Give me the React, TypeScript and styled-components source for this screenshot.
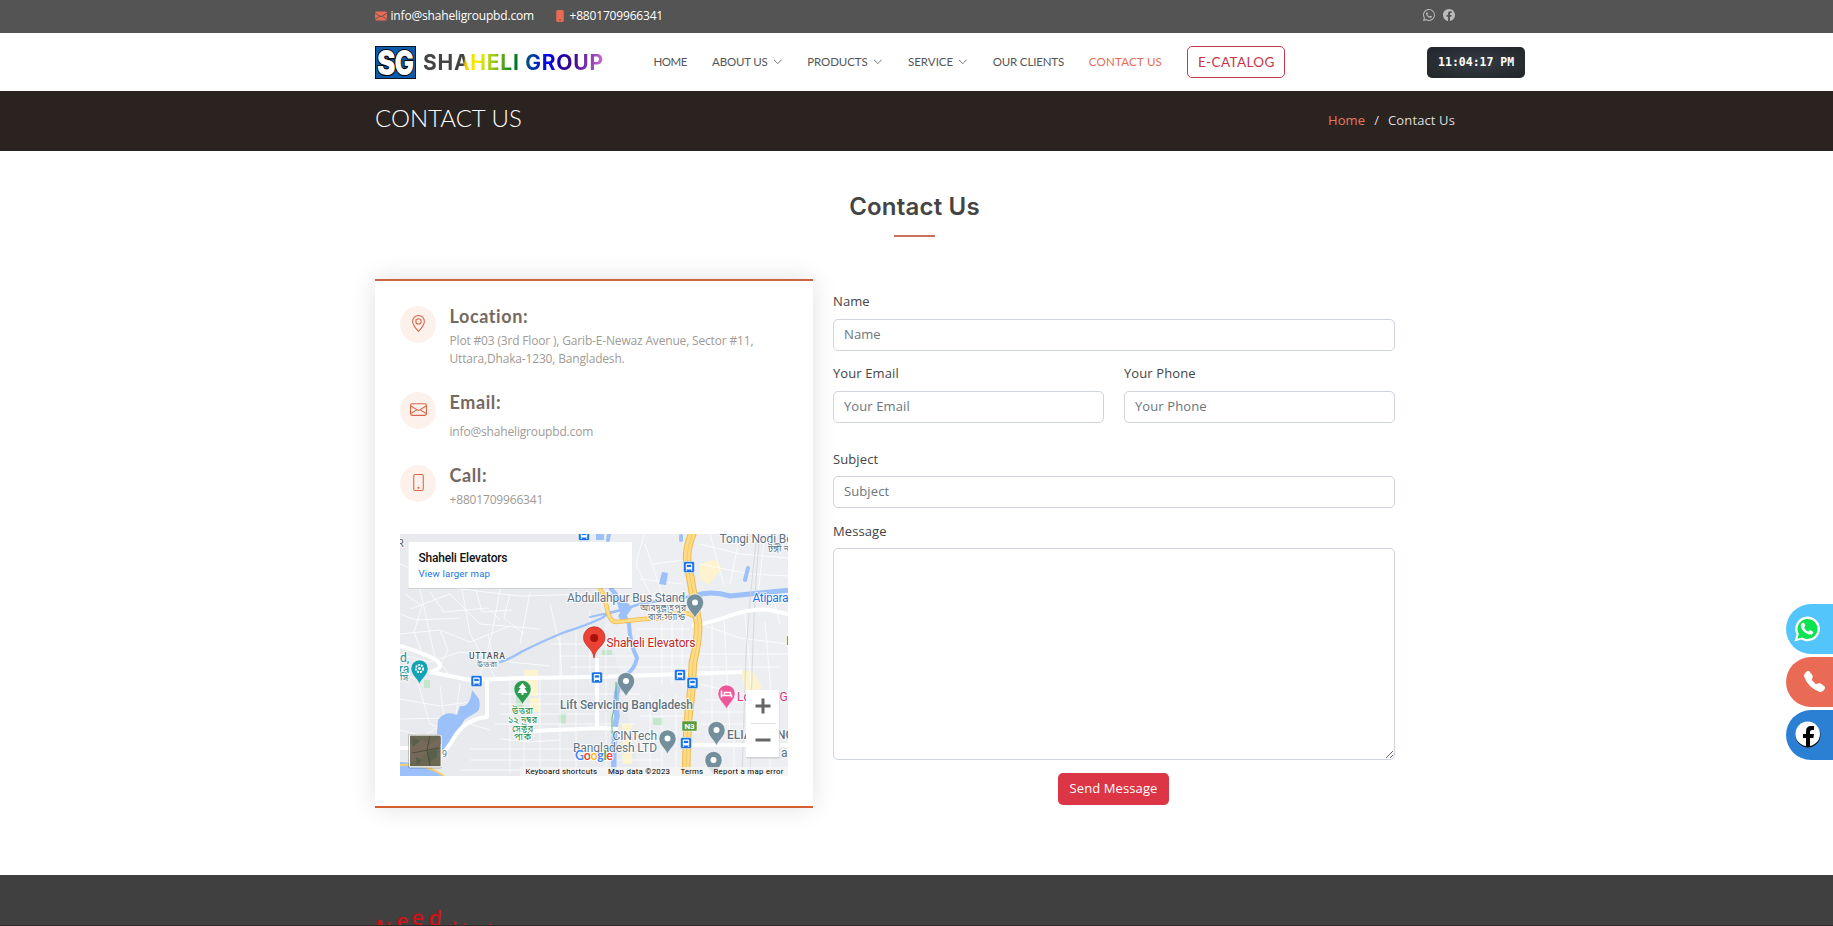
import React from "react";
import styled, { createGlobalStyle } from "styled-components";
import {
  BsChevronDown,
  BsEnvelope,
  BsEnvelopeFill,
  BsFacebook,
  BsGeoAlt,
  BsPhone,
  BsPhoneFill,
  BsTelephoneFill,
  BsWhatsapp,
} from "react-icons/bs";

const GlobalStyle = createGlobalStyle`
  * { box-sizing: border-box; }
  body {
    margin: 0;
    background: #fff;
    color: #444;
    font-family: "Open Sans", "Noto Sans", sans-serif;
    font-size: 13px;
    overflow: hidden;
  }
  h1, h2, h4, p { margin: 0; }
  a { color: inherit; text-decoration: none; }
`;

const Page = styled.div`
  height: 926px;
  display: flex;
  flex-direction: column;
  overflow: hidden;
`;

const Band = styled.div<{ $height: number; $bg: string }>`
  flex: none;
  height: ${(p) => p.$height}px;
  background: ${(p) => p.$bg};
  padding-right: 3px;
`;

const Container = styled.div`
  width: 1080px;
  height: 100%;
  margin: 0 auto;
  display: flex;
  align-items: center;
`;

const TopContact = styled.a<{ $width: number }>`
  display: flex;
  align-items: center;
  gap: 3.5px;
  width: ${(p) => p.$width}px;
  margin-bottom: 2px;
  color: #fff;
  font-size: 12px;
  letter-spacing: -0.18px;
  white-space: nowrap;
  svg { flex: none; color: #ea6a56; }
`;

const Socials = styled.div`
  display: flex;
  gap: 8px;
  margin: 0 0 3px auto;
  color: #bbb;
`;

const Logo = styled.a`
  display: flex;
  align-items: center;
  gap: 7px;
  width: 278.5px;
  flex: none;
  margin-top: 1px;
`;

const LogoName = styled.h1`
  font: 700 21px/28px Inter, sans-serif;
  letter-spacing: 0.75px;
  margin-top: 1px;
  white-space: nowrap;
  color: transparent;
  background: linear-gradient(
    100deg,
    #444 0%, #444 23%, #f2c800 24%, #f7f000 30%, #9bc81c 39%, #3b9b1c 46%, #007a1e 51%,
    #005a70 56%, #0018d8 65%, #0a00e0 70%, #2a0090 78%, #4b0f94 84%, #8a3cb4 91%, #e07be0 100%
  );
  background-clip: text;
  -webkit-background-clip: text;
`;

const Nav = styled.nav`
  display: flex;
  align-items: center;
  gap: 25.1px;
  flex: none;
`;

const NavLink = styled.a<{ $active?: boolean }>`
  display: flex;
  align-items: center;
  gap: 5px;
  color: ${(p) => (p.$active ? "#e96b56" : "#555")};
  font: 400 11.5px/18px Lato, sans-serif;
  white-space: nowrap;
`;

const NavText = styled.span<{ $width: number; $space: number }>`
  width: ${(p) => p.$width}px;
  letter-spacing: ${(p) => p.$space}px;
`;

const CatalogButton = styled.a`
  display: flex;
  justify-content: center;
  align-items: center;
  width: 98px;
  height: 32px;
  border: 1px solid #c9364a;
  border-radius: 5px;
  color: #c9364a;
  font: 400 13.5px/20px Lato, sans-serif;
  letter-spacing: 0.4px;
  white-space: nowrap;
`;

const Clock = styled.div`
  display: flex;
  justify-content: center;
  align-items: center;
  flex: none;
  width: 98px;
  height: 31px;
  margin-left: 141.8px;
  border-radius: 5px;
  background: radial-gradient(ellipse, #353c42, #212529);
  color: #fff;
  font: 700 11.5px/14px "DejaVu Sans Mono", monospace;
`;

const PageTitle = styled.h2`
  margin-bottom: 6px;
  color: #fff;
  font: 300 24px/30px Lato, sans-serif;
`;

const Breadcrumb = styled.div`
  display: flex;
  gap: 9px;
  margin: 0 0 2px auto;
  color: #ddd;
  font-size: 13px;
  letter-spacing: 0.12px;
  a { color: #e8795c; }
`;

const Main = styled.main`
  flex: none;
  width: 1080px;
  height: 724px;
  margin-left: 375px;
  padding-top: 40px;
`;

const SectionTitle = styled.h2`
  display: flex;
  flex-direction: column;
  align-items: center;
  width: 1079px;
  height: 88px;
  color: #444;
  font: 600 24px/32px Inter, sans-serif;
  letter-spacing: 0.2px;
  &::after {
    content: "";
    width: 41px;
    height: 2px;
    margin-top: 12px;
    background: #cb7060;
  }
`;

const Columns = styled.div`
  display: flex;
  gap: 20px;
  align-items: flex-start;
`;

const InfoCard = styled.section`
  width: 438px;
  height: 529px;
  border-top: 2px solid #c8643f;
  border-bottom: 2px solid #d4602f;
  padding: 25px 25px 0;
  background: #fff;
  box-shadow: 0 0 24px rgba(0, 0, 0, 0.12);
`;

const InfoRow = styled.div<{ $height: number; $gap: number }>`
  display: flex;
  gap: 13.5px;
  height: ${(p) => p.$height}px;
  h4 {
    color: #75695f;
    font: 700 18px/21px Lato, sans-serif;
    letter-spacing: 0.6px;
    margin-bottom: ${(p) => p.$gap}px;
  }
  p {
    color: #a09a94;
    font-size: 12px;
    line-height: 18px;
    letter-spacing: -0.17px;
    white-space: nowrap;
  }
`;

const InfoIcon = styled.span`
  display: flex;
  justify-content: center;
  align-items: center;
  width: 36px;
  height: 37px;
  padding-bottom: 2px;
  border-radius: 50%;
  background: #fdf1ec;
  color: #dc6546;
`;

const MapFrame = styled.div`
  width: 388px;
  height: 242px;
  overflow: hidden;
  svg { display: block; }
`;

const Form = styled.form`
  width: 562px;
  padding-top: 12px;
`;

const FieldRow = styled.div<{ $height: number }>`
  display: grid;
  grid-auto-flow: column;
  grid-auto-columns: 1fr;
  gap: 20px;
  height: ${(p) => p.$height}px;
`;

const Field = styled.label<{ $gap?: number }>`
  display: flex;
  flex-direction: column;
  gap: ${(p) => p.$gap ?? 8}px;
  line-height: 20px;
  color: #444;
  letter-spacing: 0.1px;
`;

const Input = styled.input`
  width: 100%;
  height: 32px;
  padding: 0 10px 2px;
  border: 1px solid #ced4da;
  border-radius: 5px;
  background: #fff;
  font: 400 13px "Open Sans", sans-serif;
  letter-spacing: 0.1px;
  &::placeholder { color: #6c757d; opacity: 1; }
`;

const Textarea = styled.textarea`
  display: block;
  width: 100%;
  height: 212px;
  padding: 8px 10px;
  border: 1px solid #ced4da;
  border-radius: 5px;
  background: #fff;
  font: 400 13px "Open Sans", sans-serif;
`;

const SendButton = styled.button`
  display: block;
  width: 111px;
  height: 32px;
  margin: 13px 0 0 225px;
  padding: 0 0 2px;
  border: 0;
  border-radius: 5px;
  background: #dc3545;
  color: #fff;
  font: 400 13px "Open Sans", sans-serif;
  letter-spacing: 0.1px;
`;

const Footer = styled.footer`
  flex: 1;
  background: #404040;
  border-bottom: 1px solid #302c2e;
  padding: 30px 0 0 375px;
  display: flex;
  overflow: hidden;
`;

const WaveLetter = styled.span<{ $w: number; $y: number; $r: number }>`
  width: ${(p) => p.$w}px;
  color: #cc1418;
  font: 600 21px/26px "Open Sans", sans-serif;
  transform: translateY(${(p) => p.$y}px) rotate(${(p) => p.$r}deg);
`;

const SideDock = styled.aside`
  position: fixed;
  top: 604px;
  right: 0;
  display: flex;
  flex-direction: column;
  gap: 3px;
`;

const SideButton = styled.a<{ $bg: string; $pad: number }>`
  display: flex;
  align-items: center;
  width: 47px;
  height: 50px;
  padding: 0 0 1px ${(p) => p.$pad}px;
  border-radius: 25px 0 0 25px;
  background: ${(p) => p.$bg};
  color: #fff;
`;

function LogoMark() {
  return (
    <svg width="41" height="33" viewBox="0 0 41 33">
      <rect x="0.5" y="0.5" width="40" height="32" fill="#0b5cab" stroke="#0a1626" />
      <g
        fontFamily="Inter, sans-serif"
        fontWeight="900"
        fontSize="34"
        fill="#fff"
        stroke="#000"
        strokeWidth="2.2"
        paintOrder="stroke"
        strokeLinejoin="round"
      >
        <text x="2" y="28.8" textLength="18.5" lengthAdjust="spacingAndGlyphs">S</text>
        <text x="19.5" y="28.8" textLength="19.5" lengthAdjust="spacingAndGlyphs">G</text>
      </g>
    </svg>
  );
}

function Pin({ x, y, color, children }: { x: number; y: number; color: string; children?: React.ReactNode }) {
  return (
    <g transform={`translate(${x} ${y})`}>
      <path
        d="M0 0C-1-5-8.6-9-8.6-16A8.6 8.6 0 0 1 8.6-16C8.6-9 1-5 0 0Z"
        fill={color}
        stroke="#fff"
        strokeWidth="0.6"
      />
      {children ?? <circle cy="-16" r="3" fill="#fff" />}
    </g>
  );
}

function BusStop({ x, y }: { x: number; y: number }) {
  return (
    <g transform={`translate(${x} ${y})`}>
      <rect x="-5.5" y="-5.5" width="11" height="11" rx="1.5" fill="#1a73e8" stroke="#fff" strokeWidth="0.5" />
      <rect x="-3.2" y="-3.5" width="6.4" height="6" rx="1" fill="#fff" />
      <rect x="-2.2" y="-2.2" width="4.4" height="2.3" fill="#1a73e8" />
      <path d="M-2.6 2.5v1.2M2.6 2.5v1.2" stroke="#fff" strokeWidth="1.2" />
    </g>
  );
}

type LabelProps = {
  x: number;
  y: number;
  w?: number;
  size?: number;
  color?: string;
  weight?: number;
  halo?: boolean;
  children: React.ReactNode;
};

function MapLabel({ x, y, w, size = 12, color = "#5f7381", weight = 400, halo = true, children }: LabelProps) {
  return (
    <text
      x={x}
      y={y}
      textLength={w}
      fontSize={size}
      fill={color}
      fontWeight={weight}
      stroke={halo ? "#fff" : "none"}
      strokeWidth={halo ? 2 : 0}
      strokeOpacity="0.75"
      paintOrder="stroke"
    >
      {children}
    </text>
  );
}

const STREETS = [
  "M0 30L60 55L120 62L190 60", "M10 75L50 60L80 90L140 95", "M20 55L34 120L50 142", "M62 55L70 100L96 145",
  "M100 55L92 100L80 142", "M130 58L120 110", "M150 70L160 112L162 145", "M0 100L40 96L70 108L110 92",
  "M0 120L30 128L60 118L96 124", "M18 150L30 190L60 200", "M40 152L46 200", "M0 165L40 172L70 168",
  "M0 185L50 184L90 196", "M60 150L56 180", "M100 160H240", "M100 170H240", "M100 180H200", "M95 190H235",
  "M110 146V240", "M124 146V240", "M140 146V236", "M160 100V240", "M176 96V240", "M206 90V240", "M216 150V240",
  "M70 215H250", "M70 226H260", "M60 236H250", "M150 110H290", "M160 122H290", "M170 133H380", "M190 76V150",
  "M245 10L262 60", "M252 30L285 26", "M240 45L282 50", "M244 0L236 30L250 60", "M262 90V150", "M272 88V150",
  "M282 90V150", "M236 95H290", "M250 160V240", "M262 160V236", "M276 160V236", "M240 170H286", "M240 182H286",
  "M300 90L340 104L388 110", "M312 86V200", "M324 84L330 200", "M345 80L352 160", "M365 88L372 170",
  "M300 120H388", "M300 150L340 160H388", "M305 166H388", "M300 178H345", "M300 190H345", "M300 10L340 20L388 24",
  "M310 0L324 52", "M340 0L330 50", "M365 0L358 60", "M300 30L350 40L388 42", "M372 60L380 90", "M334 200V240",
  "M350 200V240", "M370 205V240", "M300 212H388", "M100 205L130 208L160 206", "M0 140L20 146",
  "M5 60L22 72L14 98L26 130", "M30 58L44 78L88 74L100 86", "M40 96L48 116L38 136", "M110 60L104 84L124 100",
  "M0 80L16 86L60 84", "M76 56L82 78L112 76", "M0 196L24 202L40 192", "M88 100L92 120L110 128L150 132",
];

function Map() {
  const roads = [
    "M30 138L70 146L120 144L195 143L342 138",
    "M87 146V183Q66 185 55 202Q46 218 36 226",
    "M133 197L200 194L218 195",
    "M197 124V195",
    "M0 214H30",
    "M292 92Q320 86 335 80Q356 74 370 76L388 80",
    "M288 211H388",
    "M0 112Q60 130 30 138",
  ];
  const highway = "M293 -2Q287 12 287 24Q293 60 298 88Q299 105 293 128Q292 150 290 170Q287 185 286 243";
  const branch = "M199 54Q205 60 207 75Q210 88 216 88L244 85L262 84Q280 74 294 82";
  return (
    <svg width="388" height="242" viewBox="0 0 388 242" fontFamily="Roboto, 'Noto Sans Bengali', 'Noto Sans', sans-serif">
      <rect width="388" height="242" fill="#e8eaed" />
      <path d="M180 0H388V242H240L220 140Z" fill="#eceef1" />
      <path
        d="M300 30l16-5 6 10-14 16-8-6zM124 136h14v26h-12zM340 136l14 2 8 16-16 6zM222 190h10v40h-9zM130 164h10v14h-10z"
        fill="#fdf3cf"
      />
      <g fill="#c3e6cd">
        <rect x="159" y="179" width="7" height="11" />
        <rect x="202" y="116" width="10" height="5" />
        <path d="M253 184h10v7h-10zM116 162h8v12h-8zM24 146h6v8h-6z" />
      </g>
      <g fill="none" stroke="#fff" strokeWidth="0.9" strokeOpacity="0.8">
        {STREETS.map((d) => (
          <path key={d} d={d} />
        ))}
      </g>
      <g fill="none" stroke="#9cc0f9" strokeLinecap="round" strokeLinejoin="round">
        <path d="M100 128Q112 124 121 118Q145 106 165 98Q185 92 202 84Q208 78 222 76" strokeWidth="2.4" />
        <path d="M211 55Q218 60 221 75L229 90Q230 110 237 124Q235 135 225 142" strokeWidth="4" />
        <path d="M222 76L240 70Q262 66 295 62" strokeWidth="2.5" />
        <path d="M295 62Q310 56 330 62L350 60L390 56" strokeWidth="5" />
        <path d="M214 62L228 74L222 82" strokeWidth="7" />
        <path d="M222 76L190 83" strokeWidth="2" />
        <path d="M219 150Q214 165 217 182Q213 200 214 242" strokeWidth="5.5" />
        <path d="M348 34L345 46M209 0L208 6M281 2v4" strokeWidth="4" />
      </g>
      <path d="M72 156L79 165Q81 175 77 178L65 185L54 204L45 219L36 212L38 186Q45 176 57 181L60 172Q70 174 72 156Z" fill="#9cc0f9" />
      <path d="M262 38l6 1-2 12-7-1zM0 228Q24 228 44 242H0ZM196 0h8v6h-8z" fill="#9cc0f9" />
      <path d="M356 8Q350 60 346 120Q344 180 342 242M359 8Q352 80 350 242" fill="none" stroke="#cfd3d8" strokeWidth="0.8" />
      <g fill="none" stroke="#fff" strokeWidth="4" strokeLinejoin="round">
        {roads.map((d) => (
          <path key={d} d={d} />
        ))}
      </g>
      <path d="M0 231Q26 229 44 242" fill="none" stroke="#f7cf6b" strokeWidth="2" />
      <g fill="none" strokeLinejoin="round">
        <path d={branch} stroke="#f2b84b" strokeWidth="4.5" />
        <path d={branch} stroke="#fcdc86" strokeWidth="3" />
        <path d={highway} stroke="#f2b84b" strokeWidth="8.5" />
        <path d={highway} stroke="#fcdc86" strokeWidth="6.5" />
        <path d={highway} stroke="#f4c15a" strokeWidth="0.8" />
      </g>
      <path d="M216 148V165L212 184V200" fill="none" stroke="#63b77b" strokeWidth="1" />

      <BusStop x={184} y={1} />
      <BusStop x={76.5} y={147} />
      <BusStop x={197} y={143.5} />
      <BusStop x={289} y={33} />
      <BusStop x={280} y={141} />
      <BusStop x={292.5} y={149} />
      <BusStop x={286} y={209} />
      <rect x="282" y="187" width="15" height="10" rx="1" fill="#5b9b3c" stroke="#fff" strokeWidth="0.5" />
      <MapLabel x={284.5} y={195} w={10} size={8} color="#fff" weight={700} halo={false}>N3</MapLabel>

      <MapLabel x={319.5} y={9} w={73}>Tongi Nodi Be</MapLabel>
      <MapLabel x={368} y={18} size={9}>টঙ্গী ন</MapLabel>
      <MapLabel x={167} y={67.5} w={118}>Abdullahpur Bus Stand</MapLabel>
      <MapLabel x={240} y={77} w={46} size={9}>আবদুল্লাহপুর</MapLabel>
      <MapLabel x={248} y={86} w={37} size={9}>বাস-স্ট্যান্ড</MapLabel>
      <MapLabel x={352.5} y={67.5} w={36} color="#1a73e8">Atipara</MapLabel>
      <MapLabel x={-3} y={13} size={11} color="#5f6368">R</MapLabel>
      <MapLabel x={69} y={125} w={36} size={8.5} color="#55595e" weight={500}>UTTARA</MapLabel>
      <MapLabel x={77} y={133} size={8.5} w={20}>উত্তরা</MapLabel>
      <MapLabel x={0} y={128} color="#12919d">d,</MapLabel>
      <MapLabel x={-1} y={139} color="#12919d">ra</MapLabel>
      <MapLabel x={0} y={147} size={9} color="#12919d">সি</MapLabel>
      <MapLabel x={206.5} y={112.5} w={89} color="#c5221f">Shaheli Elevators</MapLabel>
      <MapLabel x={160} y={175} w={133} weight={500}>Lift Servicing Bangladesh</MapLabel>
      <MapLabel x={112} y={180} size={9} w={21} color="#1e8e4a">উত্তরা</MapLabel>
      <MapLabel x={108} y={189} size={9} w={29} color="#1e8e4a">১২ নম্বর</MapLabel>
      <MapLabel x={112} y={198} size={9} w={21} color="#1e8e4a">সেক্টর</MapLabel>
      <MapLabel x={114} y={206} size={9} w={17} color="#1e8e4a">পার্ক</MapLabel>
      <MapLabel x={212.5} y={206} w={44.5}>CINTech</MapLabel>
      <MapLabel x={173} y={218} w={84}>Bangladesh LTD</MapLabel>
      <MapLabel x={327} y={205} weight={500}>ELIA</MapLabel>
      <MapLabel x={377} y={205} weight={500}>NG</MapLabel>
      <MapLabel x={337} y={167} color="#d6337c">Lo</MapLabel>
      <MapLabel x={379.5} y={167} color="#d6337c">Gu</MapLabel>
      <MapLabel x={381} y={223}>ai</MapLabel>
      <MapLabel x={42} y={223} size={9}>9</MapLabel>
      <MapLabel x={386} y={111}>I</MapLabel>

      <Pin x={295} y={84.5} color="#738f9c" />
      <Pin x={226} y={163} color="#738f9c" />
      <Pin x={267.5} y={220.5} color="#738f9c" />
      <Pin x={316.5} y={212} color="#738f9c" />
      <Pin x={313.5} y={242} color="#738f9c" />
      <Pin x={326.5} y={175.5} color="#f0569a">
        <path d="M-5-19v7M-5-14H5v2M-2-15v-2h6v3" fill="none" stroke="#fff" strokeWidth="1.6" />
      </Pin>
      <Pin x={122.5} y={171} color="#2b9c50">
        <path d="M0-22l4 5h-2l3 5h-4v2h-2v-2h-4l3-5h-2z" fill="#fff" />
      </Pin>
      <Pin x={19.5} y={150.5} color="#14a2b4">
        <circle cy="-16" r="3.6" fill="none" stroke="#fff" strokeWidth="1.8" strokeDasharray="2 1" />
        <circle cy="-16" r="1.4" fill="#fff" />
      </Pin>
      <path d="M194 124C193 114 183.5 112 183.5 103.5A10.700 10.700 0 0 1 205 103.5C205 112 195 114 194 124Z" fill="#ea4335" stroke="#c5221f" strokeWidth="0.7" />
      <circle cx="194.2" cy="104" r="4" fill="#a8120c" />

      <rect x="8" y="9" width="224" height="46" rx="1" fill="#000" fillOpacity="0.1" />
      <rect x="8.3" y="8" width="223.7" height="46" rx="1" fill="#fff" />
      <MapLabel x={18.5} y={28} w={89} size={12} color="#111" weight={500} halo={false}>Shaheli Elevators</MapLabel>
      <MapLabel x={18.5} y={43} w={71.5} size={9.6} color="#1a73e8" halo={false}>View larger map</MapLabel>

      <rect x="8" y="200" width="34" height="34.5" rx="2" fill="#000" fillOpacity="0.25" />
      <rect x="8.8" y="200.4" width="33" height="33" rx="1.5" fill="#fff" />
      <rect x="10" y="201.6" width="30.6" height="30.6" fill="#6a6853" />
      <path d="M10 212l12-6 9 4 9.600-7v7l-12 6-8 9-10.600 4z" fill="#75695a" />
      <path d="M12 204l8 3-7 6zM28 218l9-3v8l-8 5zM16 223l6 3-5 6z" fill="#56604b" />
      <path d="M30 202l-3 14 3 16M12 219l27-5" fill="none" stroke="#4b4a3d" strokeWidth="0.9" />

      <rect x="346" y="157" width="34" height="67.5" rx="2" fill="#000" fillOpacity="0.16" />
      <rect x="346" y="156" width="33.5" height="67.3" rx="1.5" fill="#fff" />
      <path d="M351 189.5H376" stroke="#e0e0e0" strokeWidth="1" />
      <path d="M355.500 172H370.500M363 164.500V179.500M355.500 206H370.500" stroke="#666" strokeWidth="3" />

      <rect x="120" y="233" width="268" height="9" fill="#f5f5f5" fillOpacity="0.8" />
      <text x="175" y="226" fontSize="12.5" textLength="38" fontFamily="Lato, sans-serif" fontWeight="700" stroke="#fff" strokeWidth="1.5" paintOrder="stroke">
        <tspan fill="#4285f4">G</tspan>
        <tspan fill="#ea4335">o</tspan>
        <tspan fill="#fbbc04">o</tspan>
        <tspan fill="#4285f4">g</tspan>
        <tspan fill="#34a853">l</tspan>
        <tspan fill="#ea4335">e</tspan>
      </text>
      <MapLabel x={125.5} y={239.5} w={71.5} size={7.8} color="#000" halo={false}>Keyboard shortcuts</MapLabel>
      <MapLabel x={208} y={239.5} w={62} size={7.8} color="#000" halo={false}>Map data ©2023</MapLabel>
      <MapLabel x={280.5} y={239.5} w={22.5} size={7.8} color="#000" halo={false}>Terms</MapLabel>
      <MapLabel x={313.5} y={239.5} w={70} size={7.8} color="#000" halo={false}>Report a map error</MapLabel>
    </svg>
  );
}

const NAV = [
  { label: "HOME", width: 33.5, space: -0.5 },
  { label: "ABOUT US", width: 55.5, space: -0.2, menu: true },
  { label: "PRODUCTS", width: 61, space: -0.1, menu: true },
  { label: "SERVICE", width: 45, space: 0, menu: true },
  { label: "OUR CLIENTS", width: 71, space: -0.15 },
  { label: "CONTACT US", width: 73.5, space: 0.25, active: true },
];

const LETTERS = [
  { ch: "N", w: 20.5, y: 10, r: 12 },
  { ch: "e", w: 16.5, y: 2, r: -5 },
  { ch: "e", w: 16.5, y: -1, r: 4 },
  { ch: "d", w: 22, y: 0, r: 4 },
  { ch: "H", w: 22, y: 12, r: 10 },
  { ch: "e", w: 14, y: 22, r: 0 },
  { ch: "l", w: 12, y: 14, r: 0 },
];

export default function App() {
  return (
    <Page>
      <GlobalStyle />
      <Band $height={33} $bg="#545454">
        <Container>
          <TopContact $width={179}>
            <BsEnvelopeFill size={12} />
            info@shaheligroupbd.com
          </TopContact>
          <TopContact $width={120}>
            <BsPhoneFill size={12} />
            +8801709966341
          </TopContact>
          <Socials>
            <BsWhatsapp size={12} />
            <BsFacebook size={12} />
          </Socials>
        </Container>
      </Band>
      <Band $height={58} $bg="#fff">
        <Container>
          <Logo>
            <LogoMark />
            <LogoName>SHAHELI GROUP</LogoName>
          </Logo>
          <Nav>
            {NAV.map((n) => (
              <NavLink key={n.label} $active={n.active}>
                <NavText $width={n.width} $space={n.space}>{n.label}</NavText>
                {n.menu && <BsChevronDown size={9.6} />}
              </NavLink>
            ))}
            <CatalogButton>E-CATALOG</CatalogButton>
          </Nav>
          <Clock>11:04:17 PM</Clock>
        </Container>
      </Band>
      <Band $height={60} $bg="#2b2320">
        <Container>
          <PageTitle>CONTACT US</PageTitle>
          <Breadcrumb>
            <a>Home</a>
            <span>/</span>
            <span>Contact Us</span>
          </Breadcrumb>
        </Container>
      </Band>

      <Main>
        <SectionTitle>Contact Us</SectionTitle>
        <Columns>
          <InfoCard>
            <InfoRow $height={86} $gap={5}>
              <InfoIcon><BsGeoAlt size={17} /></InfoIcon>
              <div>
                <h4>Location:</h4>
                <p>Plot #03 (3rd Floor ), Garib-E-Newaz Avenue, Sector #11,</p>
                <p>Uttara,Dhaka-1230, Bangladesh.</p>
              </div>
            </InfoRow>
            <InfoRow $height={73} $gap={10}>
              <InfoIcon><BsEnvelope size={17} /></InfoIcon>
              <div>
                <h4>Email:</h4>
                <p>info@shaheligroupbd.com</p>
              </div>
            </InfoRow>
            <InfoRow $height={69} $gap={5}>
              <InfoIcon><BsPhone size={17} /></InfoIcon>
              <div>
                <h4>Call:</h4>
                <p>+8801709966341</p>
              </div>
            </InfoRow>
            <MapFrame>
              <Map />
            </MapFrame>
          </InfoCard>
          <Form>
            <FieldRow $height={72}>
              <Field>Name<Input placeholder="Name" /></Field>
            </FieldRow>
            <FieldRow $height={86}>
              <Field>Your Email<Input placeholder="Your Email" /></Field>
              <Field>Your Phone<Input placeholder="Your Phone" /></Field>
            </FieldRow>
            <FieldRow $height={72}>
              <Field $gap={7}>Subject<Input placeholder="Subject" /></Field>
            </FieldRow>
            <Field $gap={7}>Message<Textarea /></Field>
            <SendButton type="button">Send Message</SendButton>
          </Form>
        </Columns>
      </Main>

      <Footer>
        {LETTERS.map((l, i) => (
          <WaveLetter key={i} $w={l.w} $y={l.y} $r={l.r}>{l.ch}</WaveLetter>
        ))}
      </Footer>

      <SideDock>
        <SideButton $bg="#54c5fb" $pad={8}>
          <svg width="26" height="26" viewBox="0 0 26 26">
            <path d="M0.500 25.500L2.600 18.500A12.300 12.300 0 1 1 7.500 23.600Z" fill="#fff" />
            <path d="M3.300 22.700L4.900 18A10 10 0 1 1 8.200 21.400Z" fill="#0be350" />
            <path d="M9 6.800c-1.600 0-2.600 1.800-2.100 3.700 1.100 4.200 4.600 7.300 8.800 8 1.900.3 3.600-.9 3.600-2.600l-3.200-1.800-1.600 1.500c-2-.8-3.600-2.400-4.400-4.200l1.300-1.600-1.300-3z" fill="#fff" />
          </svg>
        </SideButton>
        <SideButton $bg="#e96b56" $pad={18}>
          <BsTelephoneFill size={21} />
        </SideButton>
        <SideButton $bg="#2c80d3" $pad={8.5}>
          <svg width="26" height="27" viewBox="0 0 26 27">
            <circle cx="13" cy="14" r="12.500" fill="#111" />
            <circle cx="12.700" cy="12.900" r="12.300" fill="#fff" />
            <path d="M11 26V17H8v-4h3v-2.500Q11 5 16 5h3v4h-2q-2 0-2 2v2h4l-.6 4H15v9z" fill="#000" />
          </svg>
        </SideButton>
      </SideDock>
    </Page>
  );
}
